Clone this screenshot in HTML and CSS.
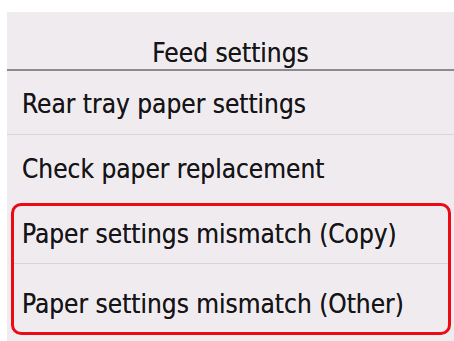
FILE: index.html
```html
<!DOCTYPE html>
<html>
<head>
<meta charset="utf-8">
<link rel="stylesheet" href="styles.css">
</head>
<body>
<div class="panel">
  <div class="header">Feed settings</div>
  <div class="row row-1">Rear tray paper settings</div>
  <div class="row row-2">Check paper replacement</div>
  <div class="highlight">
    <div class="row row-3">Paper settings mismatch (Copy)</div>
    <div class="row row-4">Paper settings mismatch (Other)</div>
  </div>
</div>
</body>
</html>
```
FILE: styles.css
```css
html, body {
  margin: 0;
  padding: 0;
  background: #ffffff;
}
body {
  width: 454px;
  height: 341px;
  overflow: hidden;
}
.panel {
  margin: 12px 0 0 7px;
  height: 329px;
  background: #efebef;
  font-family: "DejaVu Sans Condensed", "DejaVu Sans", sans-serif;
  font-stretch: condensed;
  font-size: 26px;
  line-height: 25px;
  color: #151517;
  text-shadow: 0 0 0.6px rgba(20, 20, 22, 0.7);
  display: flex;
  flex-direction: column;
}
.header {
  text-align: center;
  padding: 29px 0 3px;
  height: 25px;
  border-bottom: 2px solid #8c8a8c;
}
.row {
  height: 25px;
  padding-left: 15px;
  white-space: nowrap;
}
.row-1 {
  padding-top: 21px;
  padding-bottom: 17px;
  border-bottom: 1px solid #d8d4d8;
}
.row-2 {
  padding-top: 22px;
  padding-bottom: 21px;
}
.highlight {
  margin: 0 3px 0 4px;
  border: 3px solid #ec0a14;
  border-radius: 10px;
}
.highlight .row {
  padding-left: 8px;
}
.row-3 {
  padding-top: 16px;
  padding-bottom: 16px;
  border-bottom: 1px solid #d8d4d8;
}
.row-4 {
  padding-top: 28px;
  padding-bottom: 15px;
}
```
